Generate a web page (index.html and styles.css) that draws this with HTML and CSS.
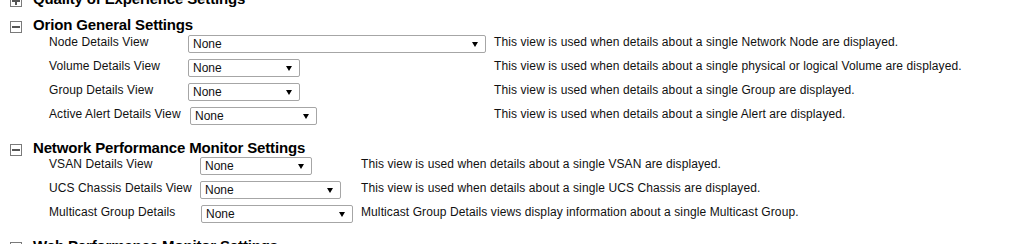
FILE: index.html
```html
<!DOCTYPE html>
<html lang="en">
<head>
    <meta charset="UTF-8">
    <title>View Settings</title>
    <link rel="stylesheet" href="styles.css">
</head>
<body>
    <div class="settings">
        <section class="group collapsed">
            <h2 class="group-title"><span class="toggle plus"></span>Quality of Experience Settings</h2>
        </section>

        <section class="group orion">
            <h2 class="group-title"><span class="toggle"></span>Orion General Settings</h2>
            <div class="row">
                <label>Node Details View</label>
                <span class="dropdown" style="width: 298px"><select><option>None</option></select></span>
                <span class="desc">This view is used when details about a single Network Node are displayed.</span>
            </div>
            <div class="row">
                <label>Volume Details View</label>
                <span class="dropdown" style="width: 112px"><select><option>None</option></select></span>
                <span class="desc">This view is used when details about a single physical or logical Volume are displayed.</span>
            </div>
            <div class="row">
                <label>Group Details View</label>
                <span class="dropdown" style="width: 112px"><select><option>None</option></select></span>
                <span class="desc">This view is used when details about a single Group are displayed.</span>
            </div>
            <div class="row">
                <label>Active Alert Details View</label>
                <span class="dropdown shifted" style="width: 127px"><select><option>None</option></select></span>
                <span class="desc">This view is used when details about a single Alert are displayed.</span>
            </div>
        </section>

        <section class="group npm">
            <h2 class="group-title"><span class="toggle"></span>Network Performance Monitor Settings</h2>
            <div class="row">
                <label>VSAN Details View</label>
                <span class="dropdown" style="width: 112px"><select><option>None</option></select></span>
                <span class="desc">This view is used when details about a single VSAN are displayed.</span>
            </div>
            <div class="row">
                <label>UCS Chassis Details View</label>
                <span class="dropdown" style="width: 141px"><select><option>None</option></select></span>
                <span class="desc">This view is used when details about a single UCS Chassis are displayed.</span>
            </div>
            <div class="row">
                <label>Multicast Group Details</label>
                <span class="dropdown shifted" style="width: 152px"><select><option>None</option></select></span>
                <span class="desc">Multicast Group Details views display information about a single Multicast Group.</span>
            </div>
        </section>

        <section class="group collapsed">
            <h2 class="group-title"><span class="toggle plus"></span>Web Performance Monitor Settings</h2>
        </section>
    </div>
</body>
</html>
```
FILE: styles.css
```css
body {
    margin: 0;
    background-color: white;
    color: #111;
    font-family: 'Liberation Sans', Arial, sans-serif;
    font-size: 12px;
}

.settings {
    margin-top: -10px;
}

.group {
    margin-bottom: 8px;
}

.group-title {
    display: flex;
    align-items: flex-start;
    margin: 0;
    padding-left: 10px;
    font-size: 15px;
    font-weight: bold;
    line-height: 18px;
    letter-spacing: -0.15px;
    color: black;
}

/* expand / collapse box */
.toggle {
    position: relative;
    box-sizing: border-box;
    width: 12px;
    height: 12px;
    margin: 5px 11px 0 0;
    border: 1px solid #7a7a7a;
    flex-shrink: 0;
}

.toggle::before {
    content: "";
    position: absolute;
    left: 1px;
    top: 4px;
    width: 8px;
    height: 2px;
    background-color: #555;
}

.toggle.plus::after {
    content: "";
    position: absolute;
    left: 4px;
    top: 1px;
    width: 2px;
    height: 8px;
    background-color: #555;
}

.row {
    display: grid;
    align-items: start;
    height: 24px;
    padding-left: 49px;
}

.orion .row {
    grid-template-columns: 139px 306px 1fr;
    margin-top: 1px;
}

.orion .row + .row {
    margin-top: 0;
}

.npm .row {
    grid-template-columns: 151px 161px 1fr;
}

.row label,
.row .desc {
    line-height: 14px;
    letter-spacing: 0.1px;
    white-space: nowrap;
}

.dropdown {
    position: relative;
    display: block;
    height: 18px;
}

.dropdown.shifted {
    margin-left: 1px;
}

.orion .dropdown.shifted {
    margin-left: 2px;
}

.dropdown select {
    -webkit-appearance: none;
    appearance: none;
    box-sizing: border-box;
    width: 100%;
    height: 18px;
    margin: 0;
    padding: 0 16px 0 4px;
    border: 1px solid #a6a6a6;
    border-radius: 2px;
    background-color: white;
    color: #111;
    font-family: 'Liberation Sans', Arial, sans-serif;
    font-size: 12px;
}

/* little black arrow */
.dropdown::after {
    content: "";
    position: absolute;
    right: 8px;
    top: 7px;
    border-left: 3px solid transparent;
    border-right: 3px solid transparent;
    border-top: 5px solid black;
    pointer-events: none;
}
```
